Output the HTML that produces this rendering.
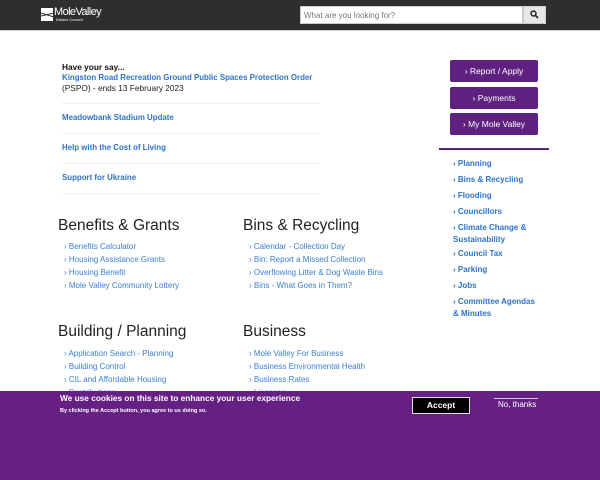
<!DOCTYPE html>
<html><head><meta charset="utf-8"><style>
*{margin:0;padding:0;box-sizing:border-box}
body{width:600px;height:480px;overflow:hidden;background:#fff;font-family:"Liberation Sans",sans-serif;position:relative}
.hdr{position:absolute;left:0;top:0;width:600px;height:31px;background:#2e2e2e;border-bottom:1px solid #ccc}
.a{position:absolute;white-space:nowrap}
.lnk{color:#2b73c9;font-weight:bold;font-size:7.9px}
.sb{position:absolute;left:450px;width:88px;height:22px;background:#5f2180;color:#fff;font-size:8.5px;text-align:center;line-height:22px;border-radius:2px}
.side{position:absolute;left:453px;color:#2b73c9;font-weight:bold;font-size:8px;line-height:12px}
.hr{position:absolute;left:62px;width:258px;height:1px;background:#eee}
h2{position:absolute;font-weight:normal;font-size:15.5px;color:#222}
.ll{position:absolute;font-size:8px;color:#3a7fd0;line-height:13px}
</style></head><body>
<div class="hdr"></div>
<div class="a" style="left:41px;top:8px;width:12px;height:13px;background:#fff"></div>
<svg class="a" style="left:41px;top:8px" width="13" height="13"><path d="M0 5 L13 9 M0 8 L13 5" stroke="#2e2e2e" stroke-width="1"/></svg>
<div class="a" style="left:54px;top:6px;color:#fff;font-size:11px;letter-spacing:-0.6px">MoleValley</div>
<div class="a" style="left:56px;top:17px;color:#fff;font-size:4px">District Council</div>
<div class="a" style="left:300px;top:6px;width:223px;height:18px;background:#fff;border:1px solid #ccc;font-size:8px;color:#777;padding:4px 3px">What are you looking for?</div>
<div class="a" style="left:523px;top:6px;width:23px;height:18px;background:#e8e8e8;border:1px solid #ccc"></div>
<svg class="a" style="left:530px;top:10px" width="9" height="9"><circle cx="3.5" cy="3.5" r="2.5" stroke="#222" stroke-width="1.4" fill="none"/><path d="M5.3 5.3 L8 8" stroke="#222" stroke-width="1.6"/></svg>

<div class="a" style="left:62px;top:62px;font-size:8.3px;font-weight:bold;color:#111">Have your say...</div>
<div class="a lnk" style="left:62px;top:73px">Kingston Road Recreation Ground Public Spaces Protection Order</div>
<div class="a" style="left:62px;top:83px;font-size:8.3px;color:#222">(PSPO) - ends 13 February 2023</div>
<div class="hr" style="top:103px"></div>
<div class="a lnk" style="left:62px;top:113px">Meadowbank Stadium Update</div>
<div class="hr" style="top:133px"></div>
<div class="a lnk" style="left:62px;top:143px">Help with the Cost of Living</div>
<div class="hr" style="top:163px"></div>
<div class="a lnk" style="left:62px;top:173px">Support for Ukraine</div>
<div class="hr" style="top:193px"></div>

<div class="sb" style="top:60px">› Report / Apply</div>
<div class="sb" style="top:87px">› Payments</div>
<div class="sb" style="top:113px">› My Mole Valley</div>
<div class="a" style="left:439px;top:148px;width:110px;height:2px;background:#5f2180"></div>
<div class="side" style="top:158px">› Planning</div>
<div class="side" style="top:174px">› Bins &amp; Recycling</div>
<div class="side" style="top:190px">› Flooding</div>
<div class="side" style="top:206px">› Councillors</div>
<div class="side" style="top:222px">› Climate Change &amp;<br>Sustainability</div>
<div class="side" style="top:248px">› Council Tax</div>
<div class="side" style="top:264px">› Parking</div>
<div class="side" style="top:280px">› Jobs</div>
<div class="side" style="top:296px">› Committee Agendas<br>&amp; Minutes</div>

<h2 style="left:58px;top:217px">Benefits &amp; Grants</h2>
<h2 style="left:243px;top:217px">Bins &amp; Recycling</h2>
<div class="ll" style="left:64px;top:240px">› Benefits Calculator<br>› Housing Assistance Grants<br>› Housing Benefit<br>› Mole Valley Community Lottery</div>
<div class="ll" style="left:249px;top:240px">› Calendar - Collection Day<br>› Bin: Report a Missed Collection<br>› Overflowing Litter &amp; Dog Waste Bins<br>› Bins - What Goes in Them?</div>
<h2 style="left:58px;top:323px">Building / Planning</h2>
<h2 style="left:243px;top:323px">Business</h2>
<div class="ll" style="left:64px;top:347px">› Application Search - Planning<br>› Building Control<br>› CIL and Affordable Housing<br>&nbsp;&nbsp;Contributions</div>
<div class="ll" style="left:249px;top:347px">› Mole Valley For Business<br>› Business Environmental Health<br>› Business Rates<br>› Licences</div>

<div class="a" style="left:0;top:391px;width:600px;height:89px;background:#661f82"></div>
<div class="a" style="left:60px;top:393px;color:#fff;font-weight:bold;font-size:8.3px">We use cookies on this site to enhance your user experience</div>
<div class="a" style="left:60px;top:408px;color:#fff;font-weight:bold;font-size:5.5px">By clicking the Accept button, you agree to us doing so.</div>
<div class="a" style="left:412px;top:397px;width:58px;height:17px;background:#000;border:1px solid #ddd;color:#fff;font-weight:bold;font-size:8.5px;text-align:center;line-height:15px">Accept</div>
<div class="a" style="left:494px;top:398px;width:44px;height:1px;background:#ccc"></div>
<div class="a" style="left:498px;top:400px;color:#fff;font-size:8px">No, thanks</div>
</body></html>
